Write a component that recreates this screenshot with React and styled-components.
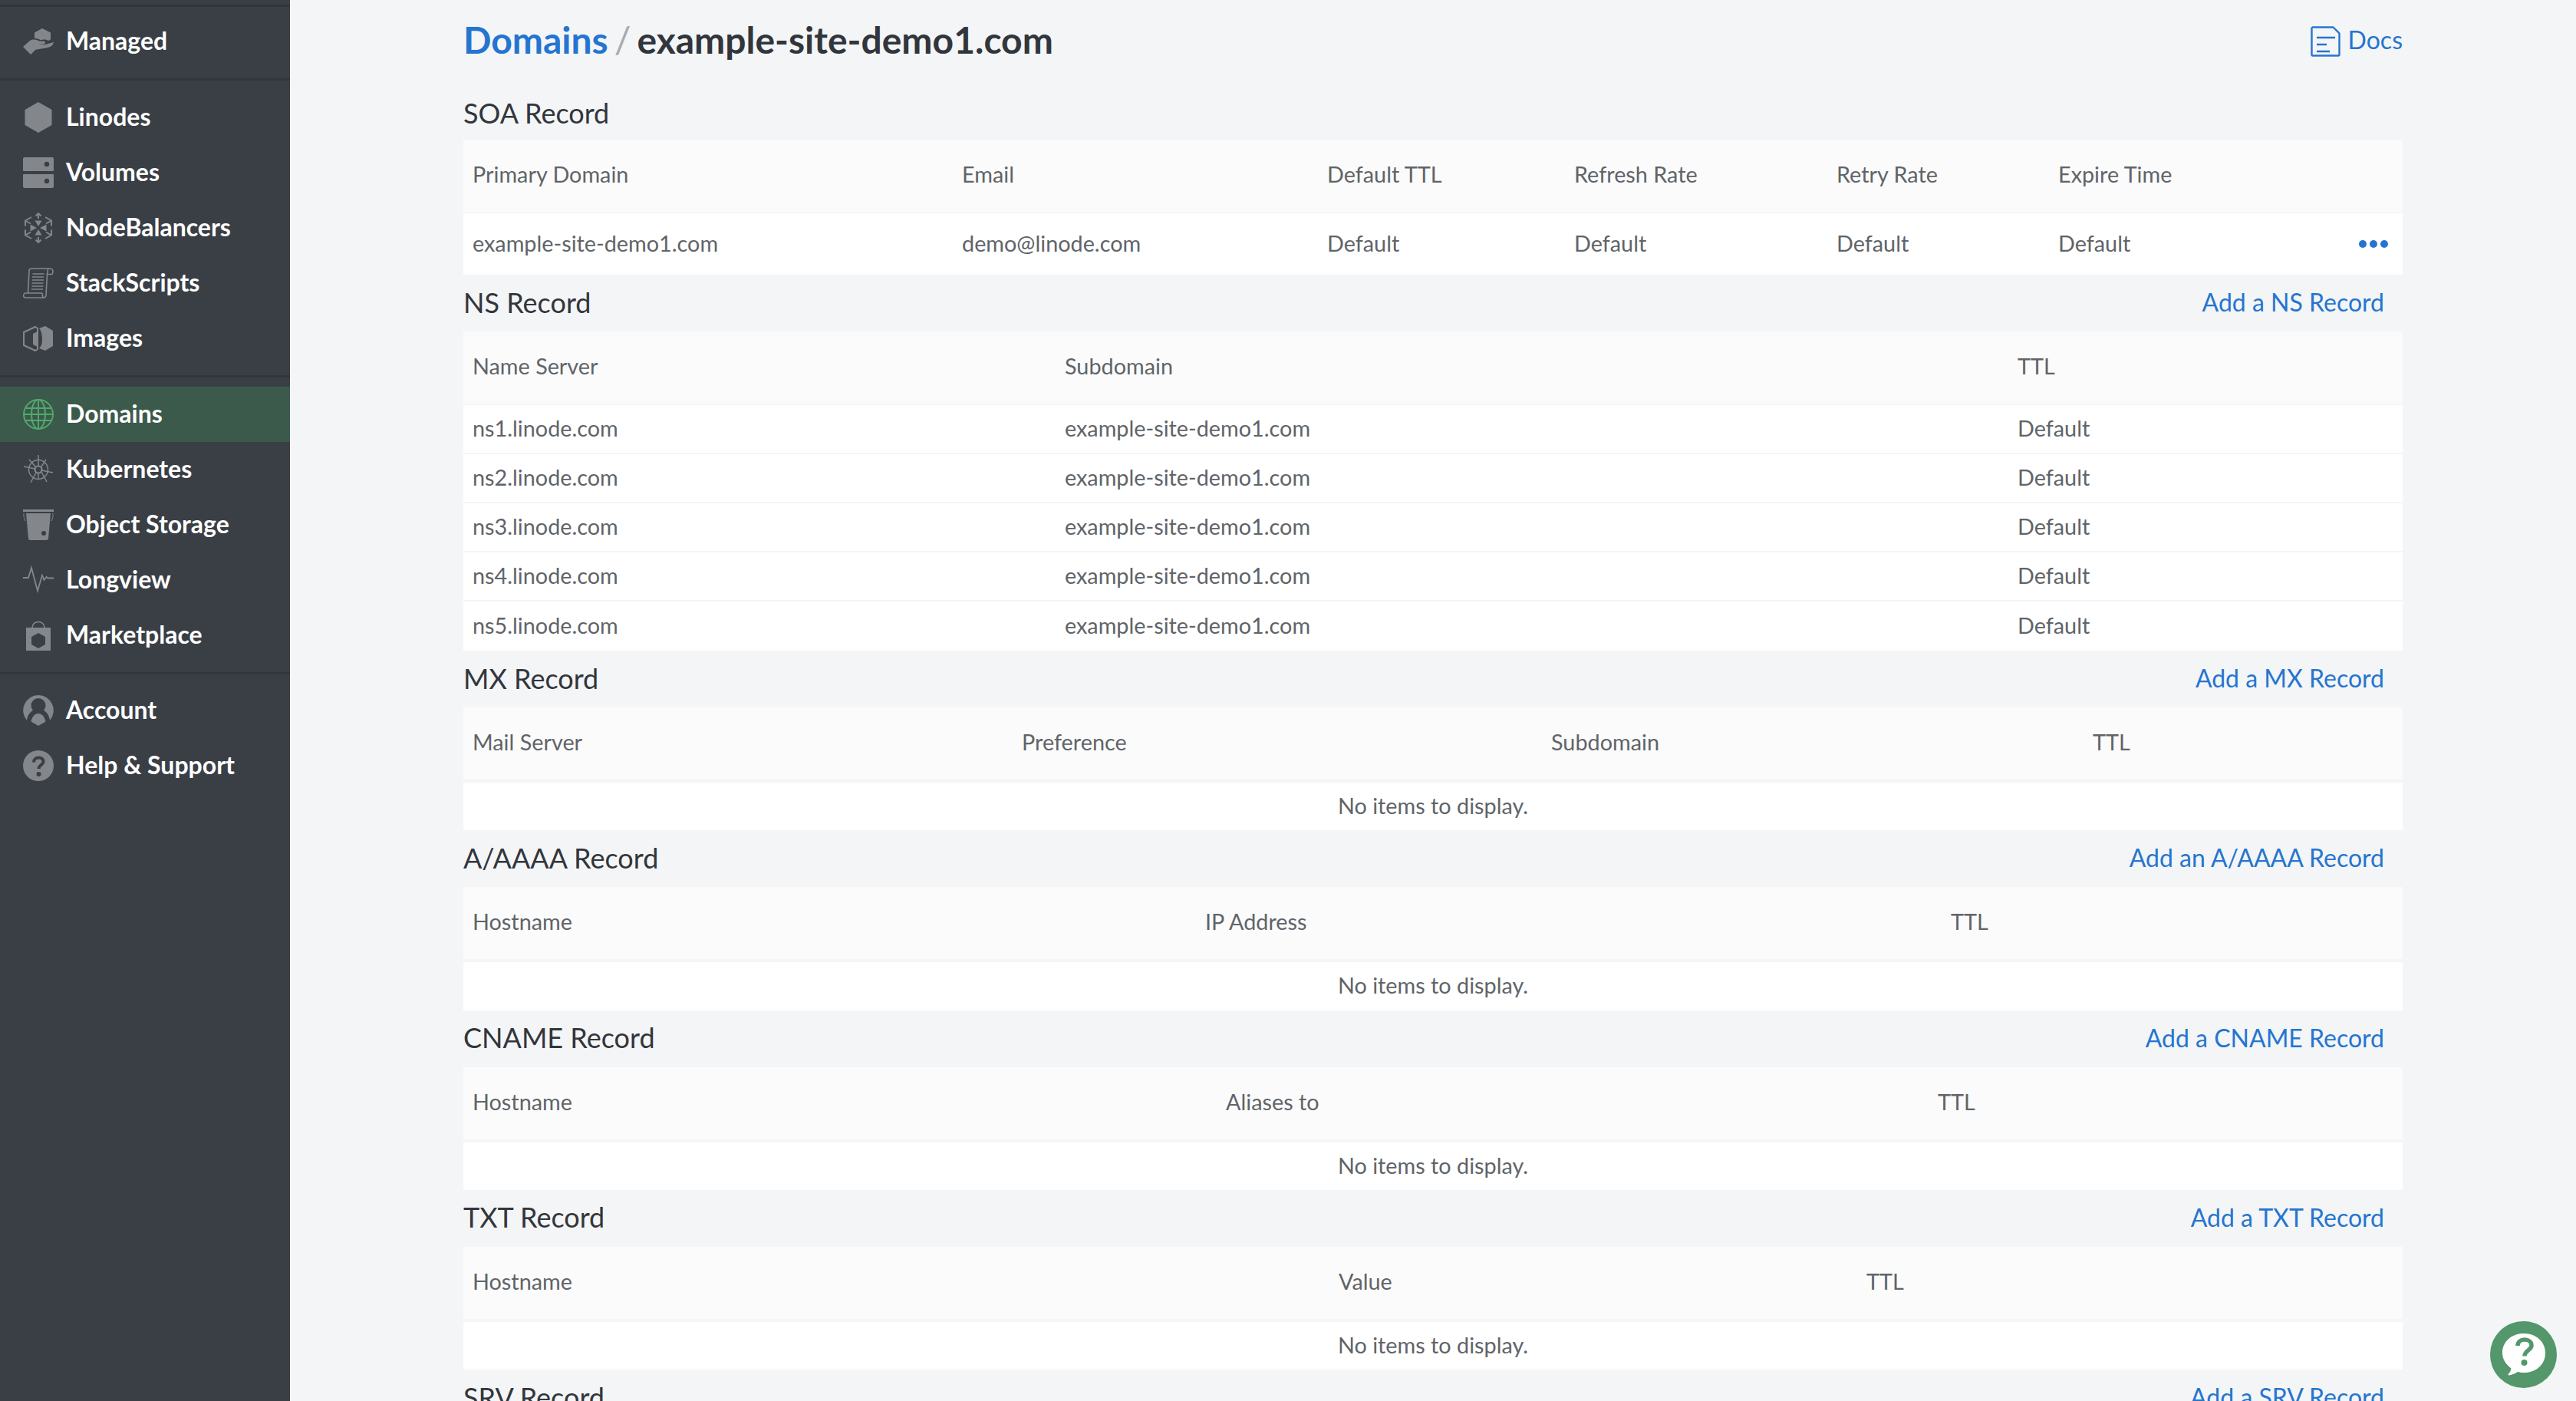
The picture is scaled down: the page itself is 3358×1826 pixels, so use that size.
import React from 'react';
import styled, { createGlobalStyle } from 'styled-components';

const Global = createGlobalStyle`
  html, body { margin: 0; padding: 0; height: 100%; overflow: hidden; background: #f4f5f6; }
  body { font-family: Lato, "Noto Sans", sans-serif; }
  * { box-sizing: border-box; }
`;
const Page = styled.div`display: flex; width: 100%; height: 100vh; overflow: hidden; position: relative;`;
const Sidebar = styled.nav`width: 378px; flex: none; height: 100%; background: #3a3f46; color: #fff;`;
const NavGroup = styled.div`
  padding: ${p => p.$top ?? 12}px 0 ${p => p.$bottom ?? 12}px;
  height: ${p => p.$height ? p.$height + 'px' : 'auto'};
  border-bottom: ${p => p.$plain ? 'none' : '3px solid #32363c'};
`;
const NavItem = styled.a`
  display: flex; align-items: center; height: 72px; padding-left: 30px; gap: 16px;
  background: ${p => p.$active ? '#3b5a4c' : 'transparent'};
  font-size: 32px; font-weight: 700; color: #fff; letter-spacing: 0;
  svg { flex: none; width: 40px; height: 40px; color: ${p => p.$active ? '#54a86c' : '#83878c'}; }
`;
const NavLabel = styled.span`padding-bottom: 4px;`;
const Main = styled.main`flex: 1; min-width: 0; padding: 0 226px; height: 100%; overflow: hidden;`;
const Header = styled.header`height: 114px; display: flex; justify-content: space-between; align-items: flex-start; padding-top: 18px;`;
const Crumbs = styled.h1`margin: 0; font-size: 48px; line-height: 68px; font-weight: 700; color: #32363c; display: flex; gap: 8px;`;
const Crumb = styled.a`color: #2575d0;`;
const Slash = styled.span`color: #a8abaf; font-weight: 400;`;
const Docs = styled.a`display: flex; align-items: center; gap: 9px; color: #2575d0; font-size: 32px; line-height: 40px; margin-top: 11px; svg { width: 40px; height: 40px; margin-top: 5px; }`;
const SectionHead = styled.div`height: ${p => p.$h ?? 74}px; padding-bottom: 3px; display: flex; align-items: center; justify-content: space-between;`;
const SectionTitle = styled.h2`margin: 0; font-size: 36px; font-weight: 400; color: #32363c;`;
const AddLink = styled.a`color: #2575d0; font-size: 32px; margin-right: 24px;`;
const Row = styled.div`
  display: grid; grid-template-columns: ${p => p.$cols}; align-items: center;
  height: ${p => p.$h}px; background: ${p => p.$head ? '#fbfbfb' : '#fff'};
  padding-bottom: ${p => p.$head ? 4 : 2}px;
  border-bottom: ${p => p.$line ? p.$line + 'px solid #f4f5f6' : 'none'};
  font-size: 28.8px; color: #606469;
`;
const Cell = styled.div`padding-left: 12px; white-space: nowrap;`;
const EmptyRow = styled.div`
  height: 62.33px; background: #fff; display: flex; align-items: center; justify-content: center;
  font-size: 28.8px; color: #606469; padding-bottom: 2px;
`;
const Dots = styled.div`position: absolute; right: 19px; display: flex; gap: 4px;`;
const Dot = styled.span`width: 10px; height: 10px; border-radius: 50%; background: #2575d0;`;
const RowWrap = styled.div`position: relative; display: flex; align-items: center; > * { flex: 1; }`;
const Fab = styled.button`
  position: absolute; left: 3246px; top: 1722px; width: 87px; height: 87px; border: 0; padding: 0; border-radius: 50%;
  background: #54976a; display: flex; align-items: center; justify-content: center;
  svg { width: 87px; height: 87px; }
`;

const I = {
  managed: <svg viewBox="0 0 40 40" fill="currentColor"><path d="M25 3l11 5.500v9l-3 1.600c-2-1.400-4-2-6-1.600l-4 .8c-1.500-1.400-4-2.400-8-2.400V8.500z"/><path d="M0 27l9-8c4-2.600 9-1.600 12 .6l6.500.2c2 .2 2.200 3.200-.2 3.600l-7.800.6 8.500.3 12-3.300c-.5 3-2.500 5.300-5.500 6.300-6 2-12 2.200-18 3.500L10 37z"/></svg>,
  linodes: <svg viewBox="0 0 40 40" fill="currentColor"><path d="M20 0l17.500 10v20L20 40 2.500 30V10z"/></svg>,
  volumes: <svg viewBox="0 0 40 40" fill="currentColor"><path fillRule="evenodd" d="M2 0h36a2 2 0 012 2v15a1 1 0 01-1 1H1a1 1 0 01-1-1V2a2 2 0 012-2zm29 5.800a3.200 3.200 0 100 6.400 3.200 3.200 0 000-6.400zM1 22h38a1 1 0 011 1v15a2 2 0 01-2 2H2a2 2 0 01-2-2V23a1 1 0 011-1zm30 5.800a3.200 3.200 0 100 6.400 3.200 3.200 0 000-6.400z"/></svg>,
  nb: <svg viewBox="0 0 40 40" fill="currentColor"><path d="M20 18l-4.500-7.500h9zM20 22l-4.500 7.500h9zM18 20l-8.500-4.500v9zM22 20l8.500-4.500v9z"/><g fill="none" stroke="currentColor" strokeWidth="2"><path d="M20 1v7M16.500 4.500L20 1l3.500 3.500M20 39v-7M16.500 35.500L20 39l3.500-3.500"/><path d="M11 6L3 10.500v7M29 6l8 4.500v7M11 34l-8-4.500v-7M29 34l8-4.500v-7"/><path d="M4 11l6 3.500M36 11l-6 3.500M4 29l6-3.500M36 29l-6-3.500"/></g></svg>,
  scripts: <svg viewBox="0 0 40 40" fill="none" stroke="currentColor" strokeWidth="1.600"><path d="M33 1H11c-2 0-3 1.500-3 3l-1.500 29"/><path d="M33 1c2.500 0 6 .5 6 3s-1 4.500-1 4.500h-6.500c.5-3 .5-6.500 1.500-7.500z"/><path d="M31.500 8L30 36c-.2 2-1.500 3-3 3H4c-3 0-4-2-3.200-4 .3-1 1-2 2.200-2h21c1.500 0 1.500 1.500 1.500 3s.5 3 2 3"/><path d="M12.500 8h15M12 12h15M12 16h15M11.500 20h15M11.500 24h15M11 28h15"/></svg>,
  images: <svg viewBox="0 0 40 40"><path d="M16 5L1 12v17l15 7 3-2V7z" fill="none" stroke="currentColor" strokeWidth="2"/><path d="M13 14l5-2.500v19L13 28z" fill="currentColor"/><path d="M21 7l8-3 10 6v20l-10 6-8-3c3-3 4-6 4-11.500S24 10 21 7z" fill="currentColor"/></svg>,
  domains: <svg viewBox="0 0 40 40" fill="none" stroke="currentColor" strokeWidth="1.900"><circle cx="20" cy="20" r="19"/><ellipse cx="20" cy="20" rx="9" ry="19"/><path d="M20 1v38M3.500 12h33M1 20h38M3.500 28h33"/></svg>,
  kube: <svg viewBox="0 0 40 40" fill="none" stroke="currentColor" strokeWidth="1.500"><circle cx="20" cy="20" r="12.500"/><circle cx="20" cy="20" r="4.500" strokeWidth="2.200"/><path d="M20 1v15M20 24.500V33M1 16l15 3M24 21l15 3M10 37l7-13M24 16l6-9M8 7l9 10M24 23l7 13"/></svg>,
  bucket: <svg viewBox="0 0 40 40"><path d="M0 0h40v3H0z" fill="currentColor"/><path d="M4 5h32l-3 33a2.500 2.500 0 01-2.500 2h-21A2.500 2.500 0 017 38z" fill="currentColor"/><circle cx="27" cy="31" r="3" fill="#3a3f46"/><path d="M1 5c-.3 4 .3 7 2 10M39 5c.3 4-.3 7-2 10" fill="none" stroke="currentColor" strokeWidth="1"/></svg>,
  longview: <svg viewBox="0 0 40 40" fill="none" stroke="currentColor" strokeWidth="1.800"><path d="M0 17h7l4-13 8 30 6-20 2.500 6 3-4 2 1.500h7.500"/></svg>,
  market: <svg viewBox="0 0 40 40"><path d="M12 10c0-10 16-10 16 0" fill="none" stroke="currentColor" strokeWidth="1.500"/><path fillRule="evenodd" d="M4 10h32v30H4zM20 17l-9 5v10l9 5 9-5V22z" fill="currentColor"/></svg>,
  account: <svg viewBox="0 0 40 40"><path d="M20 0a20 20 0 0115 33c-1-7-4-11-8-13a9.500 9.500 0 10-14 0c-4 2-7 6-8 13A20 20 0 0120 0zm0 24c4.500 0 8 4 9.500 10.500L20 40l-9.500-5.500C12 28 15.500 24 20 24z" fill="currentColor" fillRule="evenodd"/></svg>,
  help: <svg viewBox="0 0 40 40"><circle cx="20" cy="20" r="20" fill="currentColor"/><path d="M14 15.500c0-4 3-6 6.500-6 3.300 0 6 2 6 5 0 4.500-6 4.500-6 9.500" fill="none" stroke="#3a3f46" strokeWidth="4"/><circle cx="20.500" cy="31" r="3" fill="#3a3f46"/></svg>,
};

const Nav = ({ icon, label, active }) => <NavItem $active={active}>{I[icon]}<NavLabel>{label}</NavLabel></NavItem>;

const NS = ['ns1', 'ns2', 'ns3', 'ns4', 'ns5'];
const empties = [
  { title: 'MX Record', add: 'Add a MX Record', cols: '716px 690px 706px 1fr', heads: ['Mail Server', 'Preference', 'Subdomain', 'TTL'] },
  { title: 'A/AAAA Record', add: 'Add an A/AAAA Record', cols: '955px 972px 1fr', heads: ['Hostname', 'IP Address', 'TTL'] },
  { title: 'CNAME Record', add: 'Add a CNAME Record', cols: '982px 928px 1fr', heads: ['Hostname', 'Aliases to', 'TTL'] },
  { title: 'TXT Record', add: 'Add a TXT Record', cols: '1129px 688px 1fr', heads: ['Hostname', 'Value', 'TTL'] },
  { title: 'SRV Record', add: 'Add a SRV Record', cols: '1000px 600px 1fr', heads: ['Service', 'Priority', 'Domain'] },
];
const soaCols = '638px 476px 322px 342px 289px 1fr';
const nsCols = '772px 1242px 1fr';

export default function App() {
  return (
    <Page>
      <Global />
      <Sidebar>
        <NavGroup $top={0} $bottom={0} $height={9} />
        <NavGroup $top={9}><Nav icon="managed" label="Managed" /></NavGroup>
        <NavGroup>
          <Nav icon="linodes" label="Linodes" />
          <Nav icon="volumes" label="Volumes" />
          <Nav icon="nb" label="NodeBalancers" />
          <Nav icon="scripts" label="StackScripts" />
          <Nav icon="images" label="Images" />
        </NavGroup>
        <NavGroup>
          <Nav icon="domains" label="Domains" active />
          <Nav icon="kube" label="Kubernetes" />
          <Nav icon="bucket" label="Object Storage" />
          <Nav icon="longview" label="Longview" />
          <Nav icon="market" label="Marketplace" />
        </NavGroup>
        <NavGroup $top={11} $plain>
          <Nav icon="account" label="Account" />
          <Nav icon="help" label="Help & Support" />
        </NavGroup>
      </Sidebar>
      <Main>
        <Header>
          <Crumbs><Crumb>Domains</Crumb><Slash>/</Slash><span>example-site-demo1.com</span></Crumbs>
          <Docs>
            <svg viewBox="0 0 40 40" fill="none" stroke="currentColor" strokeWidth="2.400"><path d="M2.500 1.500h27l8 8v27.500a1.500 1.500 0 01-1.500 1.500H3a1.500 1.500 0 01-1.500-1.500V2.500z" strokeLinejoin="round"/><path d="M8 16h24M8 25h13M8 34h17" transform="translate(0 -1)" strokeWidth="2.600"/></svg>
            Docs
          </Docs>
        </Header>

        <SectionHead $h={68}><SectionTitle>SOA Record</SectionTitle></SectionHead>
        <Row $head $cols={soaCols} $h={96} $line={2}>
          {['Primary Domain', 'Email', 'Default TTL', 'Refresh Rate', 'Retry Rate', 'Expire Time'].map(h => <Cell key={h}>{h}</Cell>)}
        </Row>
        <RowWrap>
          <Row $cols={soaCols} $h={80}>
            {['example-site-demo1.com', 'demo@linode.com', 'Default', 'Default', 'Default', 'Default'].map((c, i) => <Cell key={i}>{c}</Cell>)}
          </Row>
          <Dots><Dot /><Dot /><Dot /></Dots>
        </RowWrap>

        <SectionHead><SectionTitle>NS Record</SectionTitle><AddLink>Add a NS Record</AddLink></SectionHead>
        <Row $head $cols={nsCols} $h={96} $line={2}>
          {['Name Server', 'Subdomain', 'TTL'].map(h => <Cell key={h}>{h}</Cell>)}
        </Row>
        {NS.map((n, i) => (
          <Row key={n} $cols={nsCols} $h={64} $line={i < 4 ? 2 : 0}>
            <Cell>{n}.linode.com</Cell><Cell>example-site-demo1.com</Cell><Cell>Default</Cell>
          </Row>
        ))}

        {empties.map(s => (
          <section key={s.title}>
            <SectionHead><SectionTitle>{s.title}</SectionTitle><AddLink>{s.add}</AddLink></SectionHead>
            <Row $head $cols={s.cols} $h={98} $line={4}>
              {s.heads.map(h => <Cell key={h}>{h}</Cell>)}
            </Row>
            <EmptyRow>No items to display.</EmptyRow>
          </section>
        ))}
      </Main>
      <Fab aria-label="Help">
        <svg viewBox="0 0 87 87"><path d="M44 16c16 0 28 10.500 28 25.500S60 67 44 67c-3 0-6-.5-8-1-3 2-7 4-11 4.500-1.500 0-2-1-1-2 2-2 3-4 3.500-7C21 56.500 16 49.500 16 41.500 16 26.500 28 16 44 16z" fill="#fff"/><path d="M36 32c0-5 4-8 9-8 5 0 9 3 9 7.500 0 6.500-9 6.500-9 14" fill="none" stroke="#54976a" strokeWidth="5.500"/><circle cx="44.500" cy="54" r="4" fill="#54976a"/></svg>
      </Fab>
    </Page>
  );
}
